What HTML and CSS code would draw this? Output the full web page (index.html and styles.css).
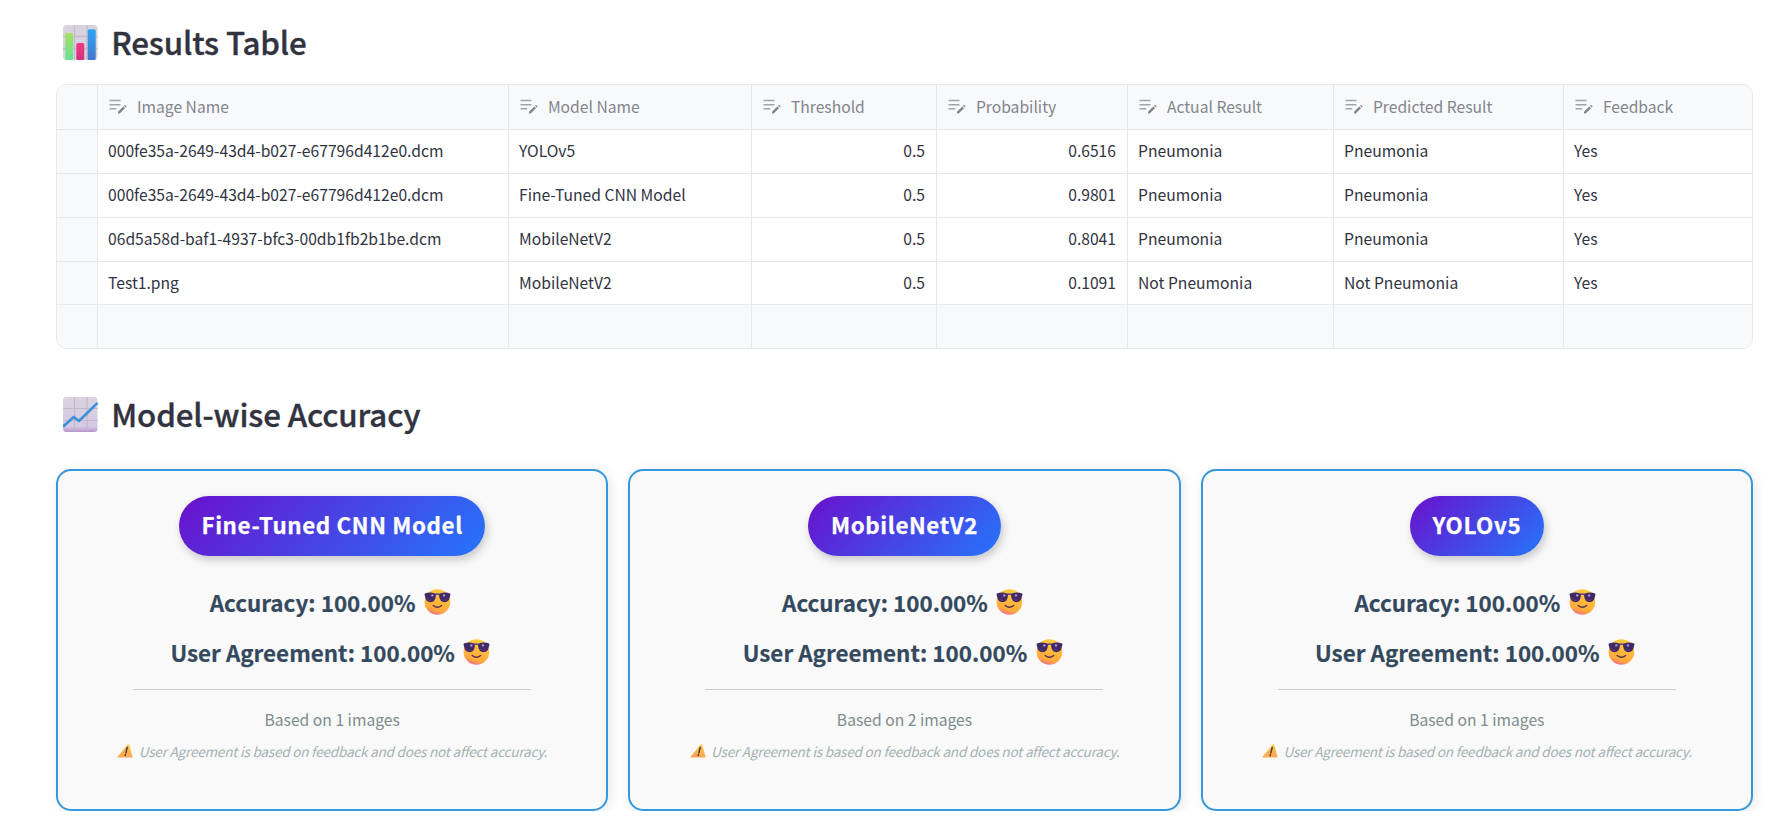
FILE: index.html
```html
<!DOCTYPE html>
<html lang="en">
<head>
<meta charset="utf-8">
<title>Results</title>
<link rel="stylesheet" href="styles.css">
</head>
<body>
<svg class="defs" width="0" height="0" aria-hidden="true">
  <defs>
    <linearGradient id="tile" x1="0" y1="0" x2="0" y2="1"><stop offset="0" stop-color="#d9d4df"/><stop offset=".85" stop-color="#d6c9e4"/><stop offset="1" stop-color="#b795cc"/></linearGradient>
    <linearGradient id="tile-light" x1="0" y1="0" x2="0" y2="1"><stop offset="0" stop-color="#d8d2de"/><stop offset="1" stop-color="#dad3e2"/></linearGradient>
    <linearGradient id="green" x1="0" y1="0" x2="0" y2="1"><stop offset="0" stop-color="#a8e05f"/><stop offset="1" stop-color="#62e394"/></linearGradient>
    <linearGradient id="pink" x1="0" y1="0" x2="0" y2="1"><stop offset="0" stop-color="#f03a80"/><stop offset="1" stop-color="#d8307c"/></linearGradient>
    <linearGradient id="blue" x1="0" y1="0" x2="0" y2="1"><stop offset="0" stop-color="#2fa4f5"/><stop offset="1" stop-color="#4278cc"/></linearGradient>
    <linearGradient id="face" x1=".65" y1="0" x2=".35" y2="1"><stop offset="0" stop-color="#ffcc3d"/><stop offset=".8" stop-color="#fea93c"/><stop offset="1" stop-color="#ef6a8a"/></linearGradient>
    <linearGradient id="warn" x1="0" y1="0" x2="0" y2="1"><stop offset="0" stop-color="#fdc84a"/><stop offset="1" stop-color="#ffa552"/></linearGradient>
    <symbol id="edit" viewBox="0 0 18 15">
      <path d="M.5 1.6h11M.5 5.7h11M.5 9.8h6.7" stroke="#a2a4aa" stroke-width="1.5"/>
      <path d="M9 14.5v-1.700l5.300-5.300 1.700 1.700-5.300 5.300zM15 6.800l.6-.6q.4-.3.8 0l.9.900q.3.400 0 .8l-.6.600z" fill="#82848c"/>
    </symbol>
    <symbol id="cool" viewBox="0 0 27 26">
      <circle cx="13.400" cy="13" r="12.800" fill="url(#face)"/>
      <path d="M9.200 16.500q4.200 3.600 8.400 0" fill="none" stroke="#53304a" stroke-width="1.400" stroke-linecap="round"/>
      <path d="M10.500 5.600q3-1.200 6 0" fill="none" stroke="#5d4385" stroke-width="1.500"/>
      <path d="M.9 4.400Q6 2.600 11 4.500q1 .6.900 2.300-.4 6.100-5.400 6.400Q1.900 13.100 1 7.300.1 5.100.9 4.400z" fill="#412866"/>
      <path d="M26.100 4.400Q21 2.600 16 4.500q-1 .6-.9 2.300.4 6.100 5.400 6.400 4.600-.1 5.500-5.900.9-2.200.1-2.900z" fill="#412866"/>
      <circle cx="8.300" cy="6.400" r="1.200" fill="#a99abf"/><circle cx="20" cy="6.400" r="1.200" fill="#a99abf"/>
      <path d="M3.200 9.500q1.500 2.600 4.300 1.900M17.500 10q1.700 2.100 4.500 1.100" fill="none" stroke="#5a3f80"/>
    </symbol>
    <symbol id="alert" viewBox="0 0 16 14">
      <path d="M10.600.5q1.200-.7 1.700.5l3.200 11.500q.2 1-.8 1H1q-1-.1-.3-1z" fill="url(#warn)"/>
      <path d="M10.200 3.500 8.900 8.800M8.400 10.600l-.2.900" stroke="#4b3d40" stroke-width="1.500" stroke-linecap="round"/>
    </symbol>
  </defs>
</svg>

<main class="page">
  <h2 class="heading">
    <svg class="heading-icon" viewBox="0 0 35 35">
      <rect width="34.500" height="35" rx="3.500" fill="url(#tile-light)"/>
      <path d="M11.500 0v35M24 0v35M0 11.500h34.500M0 23.500h34.500" stroke="#c2bccb" stroke-width="1.300"/>
      <rect x="2.300" y="8" width="7.700" height="27" rx="1.500" fill="url(#green)"/>
      <rect x="13.300" y="18" width="8" height="17" rx="1.500" fill="url(#pink)"/>
      <rect x="24.700" y="4.300" width="8" height="30.700" rx="1.500" fill="url(#blue)"/>
    </svg>
    <span>Results Table</span>
  </h2>

  <section class="table">
    <div class="row head">
      <div></div>
      <div><svg class="edit"><use href="#edit"/></svg>Image Name</div>
      <div><svg class="edit"><use href="#edit"/></svg>Model Name</div>
      <div><svg class="edit"><use href="#edit"/></svg>Threshold</div>
      <div><svg class="edit"><use href="#edit"/></svg>Probability</div>
      <div><svg class="edit"><use href="#edit"/></svg>Actual Result</div>
      <div><svg class="edit"><use href="#edit"/></svg>Predicted Result</div>
      <div><svg class="edit"><use href="#edit"/></svg>Feedback</div>
    </div>
    <div class="row"><div></div><div>000fe35a-2649-43d4-b027-e67796d412e0.dcm</div><div>YOLOv5</div><div class="num">0.5</div><div class="num">0.6516</div><div>Pneumonia</div><div>Pneumonia</div><div>Yes</div></div>
    <div class="row"><div></div><div>000fe35a-2649-43d4-b027-e67796d412e0.dcm</div><div>Fine-Tuned CNN Model</div><div class="num">0.5</div><div class="num">0.9801</div><div>Pneumonia</div><div>Pneumonia</div><div>Yes</div></div>
    <div class="row"><div></div><div>06d5a58d-baf1-4937-bfc3-00db1fb2b1be.dcm</div><div>MobileNetV2</div><div class="num">0.5</div><div class="num">0.8041</div><div>Pneumonia</div><div>Pneumonia</div><div>Yes</div></div>
    <div class="row"><div></div><div>Test1.png</div><div>MobileNetV2</div><div class="num">0.5</div><div class="num">0.1091</div><div>Not Pneumonia</div><div>Not Pneumonia</div><div>Yes</div></div>
    <div class="row blank"><div></div><div></div><div></div><div></div><div></div><div></div><div></div><div></div></div>
  </section>

  <h2 class="heading second">
    <svg class="heading-icon" viewBox="0 0 35 35">
      <rect width="34.500" height="35" rx="3.500" fill="url(#tile)"/>
      <path d="M11.500 0v34M24 0v34M0 11.500h34.500M0 23.500h34.500" stroke="#c0b9c8" stroke-width="1.200"/>
      <path d="M0 29.800 10.700 20l5.300 4L34.500 6" fill="none" stroke="#3991dc" stroke-width="2.500" stroke-linejoin="round"/>
    </svg>
    <span>Model-wise Accuracy</span>
  </h2>

  <section class="cards">
    <article class="card">
      <div class="pill">Fine-Tuned CNN Model</div>
      <p class="stat">Accuracy: 100.00% <svg class="cool"><use href="#cool"/></svg></p>
      <p class="stat">User Agreement: 100.00% <svg class="cool"><use href="#cool"/></svg></p>
      <hr class="rule">
      <p class="based">Based on 1 images</p>
      <p class="note"><svg class="alert"><use href="#alert"/></svg>User Agreement is based on feedback and does not affect accuracy.</p>
    </article>
    <article class="card">
      <div class="pill">MobileNetV2</div>
      <p class="stat">Accuracy: 100.00% <svg class="cool"><use href="#cool"/></svg></p>
      <p class="stat">User Agreement: 100.00% <svg class="cool"><use href="#cool"/></svg></p>
      <hr class="rule">
      <p class="based">Based on 2 images</p>
      <p class="note"><svg class="alert"><use href="#alert"/></svg>User Agreement is based on feedback and does not affect accuracy.</p>
    </article>
    <article class="card">
      <div class="pill">YOLOv5</div>
      <p class="stat">Accuracy: 100.00% <svg class="cool"><use href="#cool"/></svg></p>
      <p class="stat">User Agreement: 100.00% <svg class="cool"><use href="#cool"/></svg></p>
      <hr class="rule">
      <p class="based">Based on 1 images</p>
      <p class="note"><svg class="alert"><use href="#alert"/></svg>User Agreement is based on feedback and does not affect accuracy.</p>
    </article>
  </section>
</main>
</body>
</html>
```

FILE: styles.css
```css
* { box-sizing: border-box; }
body {
  margin: 0;
  background: #fff;
  color: #31333f;
  font-family: "Source Sans Pro", "Noto Sans CJK SC", "Noto Sans", sans-serif;
  overflow: hidden;
}
p, h2 { margin: 0; }
.defs { position: absolute; }
.page { padding: 20px 35px 0 56px; }

.heading {
  display: flex;
  align-items: center;
  gap: 13.7px;
  height: 44px;
  padding-left: 6.5px;
  font-size: 31.3px;
  line-height: 44px;
  font-weight: 500;
  letter-spacing: -0.13px;
  -webkit-text-stroke: 0.35px currentColor;
  white-space: nowrap;
}
.heading-icon { width: 35px; height: 35px; flex: none; }
.heading.second { margin-top: 43px; }

.table {
  margin-top: 20px;
  border: 1px solid #e8e9ec;
  border-radius: 10px;
  overflow: hidden;
  font-size: 15.66px;
}
.row {
  display: grid;
  grid-template-columns: 41px 411px 243px 185px 191px 206px 230px 188px;
  height: 44px;
}
.row > div {
  display: flex;
  align-items: center;
  padding: 0 10px 2px;
  border-right: 1px solid #e7e8eb;
  border-bottom: 1px solid #e7e8eb;
  white-space: nowrap;
}
.row > div:first-child { background: #f8f9fb; }
.row > div:last-child { border-right: 0; }
.row > .num { justify-content: flex-end; padding-right: 11px; }
.row:nth-child(5) { height: 43px; }
.row:nth-child(5) > div { padding-bottom: 1px; }
.row.head { height: 45px; color: #83858c; }
.head > div { background: #f8f9fb; padding: 0 11px 1px; border-color: #e4e5e9; }
.row.blank { height: 43px; }
.blank > div { background: #f8f9fb; border-bottom: 0; }
.edit { width: 18px; height: 15px; margin-right: 9.9px; flex: none; }

.cards {
  display: grid;
  grid-template-columns: repeat(3, 1fr);
  gap: 20px;
  margin-top: 33px;
}
.card {
  display: flex;
  flex-direction: column;
  align-items: center;
  height: 342px;
  padding-top: 25px;
  border: 2px solid #3498db;
  border-radius: 15px;
  background: #f9f9f9;
  box-shadow: 2px 2px 12px rgba(0, 0, 0, 0.1);
}
.pill {
  height: 60px;
  padding: 0 22.5px;
  border-radius: 30px;
  background: linear-gradient(135deg, #6a11cb, #2575fc);
  box-shadow: 2px 4px 8px rgba(0, 0, 0, 0.2);
  color: #fff;
  font-size: 22.4px;
  font-weight: 700;
  letter-spacing: 0.6px;
  line-height: 57px;
  white-space: nowrap;
  margin-bottom: 21px;
  -webkit-text-stroke: 0.25px currentColor;
}
.stat {
  display: flex;
  align-items: center;
  gap: 8.5px;
  height: 50px;
  padding: 0 3.5px 1px 0;
  color: #34495e;
  font-size: 22.4px;
  font-weight: 700;
  line-height: 46px;
  white-space: nowrap;
  -webkit-text-stroke: 0.2px currentColor;
}
.cool { width: 27px; height: 26px; }
.rule {
  width: 398px;
  height: 1px;
  margin: 12px 0 0;
  border: 0;
  background: #ccc;
}
.based {
  margin-top: 15px;
  height: 30px;
  color: #7f8c8d;
  font-size: 15.66px;
  line-height: 30px;
}
.note {
  display: flex;
  align-items: center;
  gap: 5.5px;
  height: 30px;
  margin-top: 1px;
  color: #a4b1b3;
  font-size: 13.6px;
  font-style: italic;
  letter-spacing: -0.23px;
  line-height: 30px;
  white-space: nowrap;
}
.alert { width: 16px; height: 14px; }
```
